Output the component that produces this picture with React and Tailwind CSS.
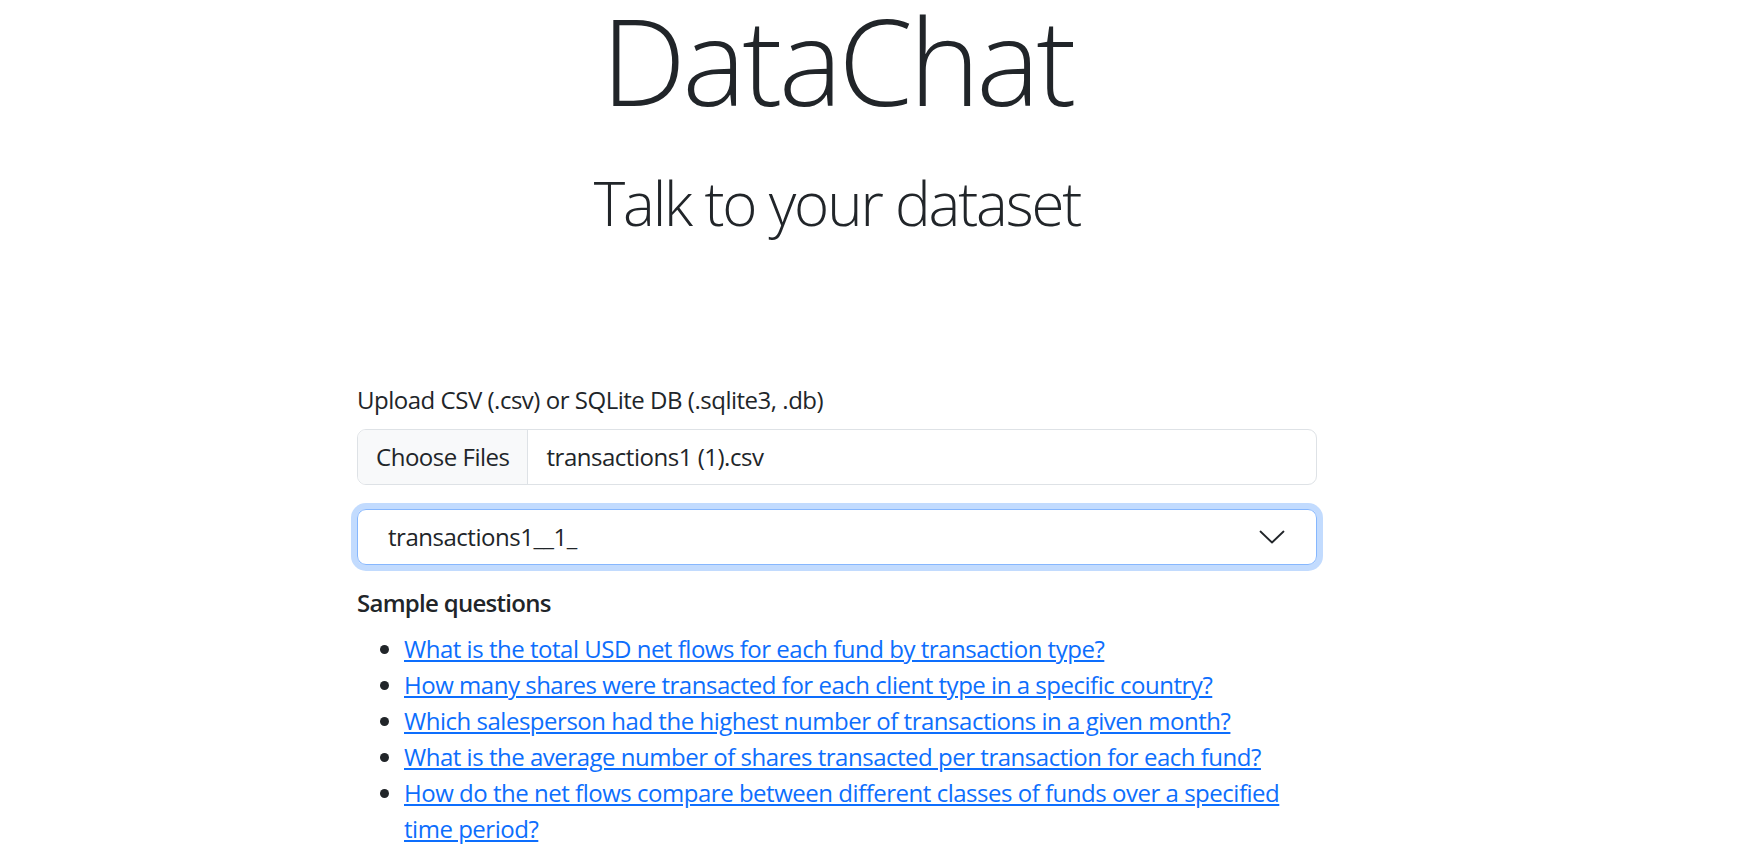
import React from 'react';

const questions = [
    'What is the total USD net flows for each fund by transaction type?',
    'How many shares were transacted for each client type in a specific country?',
    'Which salesperson had the highest number of transactions in a given month?',
    'What is the average number of shares transacted per transaction for each fund?',
    'How do the net flows compare between different classes of funds over a specified time period?',
];

const ChevronDown = () => (
    <svg width="26" height="16" viewBox="0 0 26 16" fill="none" className="shrink-0">
        <path d="M1.5 2.5 13 13.5 24.5 2.5" stroke="#212529" strokeWidth="1.8" strokeLinecap="round" strokeLinejoin="round" />
    </svg>
);

export default function App() {
    return (
        <div className="min-h-screen bg-white text-[#212529] font-['Open_Sans',sans-serif]">
            <div className="ml-[357px] w-[960px] pb-8">
                {/* header */}
                <h1 className="text-center text-[120px] font-light leading-none tracking-[-0.031em]">DataChat</h1>
                <p className="mt-[53px] text-center text-[60px] font-light leading-none tracking-[-0.036em]">Talk to your dataset</p>

                {/* upload */}
                <label className="block mt-[149px] text-[24px] leading-[36px] tracking-[-0.02em]">
                    Upload CSV (.csv) or SQLite DB (.sqlite3, .db)
                </label>
                <div className="mt-[11px] flex h-[56px] items-stretch rounded-[9px] border border-[#dee2e6] overflow-hidden text-[24px] tracking-[-0.02em]">
                    <div className="flex items-center pl-[18px] pr-[17px] bg-[#f8f9fa] border-r border-[#dee2e6]">Choose Files</div>
                    <div className="flex items-center pl-[19px]">transactions1 (1).csv</div>
                </div>

                {/* table select */}
                <div className="mt-[24px] flex h-[56px] items-center justify-between rounded-[9px] border-[1.5px] border-[#86b7fe] shadow-[0_0_0_6px_rgba(13,110,253,0.25)] pl-[30px] pr-[31px] text-[24px] tracking-[-0.02em]">
                    <span>transactions1__1_</span>
                    <ChevronDown />
                </div>

                {/* samples */}
                <h6 className="mt-[20px] text-[24px] leading-[36px] font-semibold tracking-[-0.03em]">Sample questions</h6>
                <ul className="mt-[10px] list-disc pl-[47px] text-[24px] leading-[36px] tracking-[-0.02em]">
                    {questions.map(q => (
                        <li key={q}>
                            <a href="#" className="text-[#0d6efd] underline">{q}</a>
                        </li>
                    ))}
                </ul>
            </div>
        </div>
    );
}
